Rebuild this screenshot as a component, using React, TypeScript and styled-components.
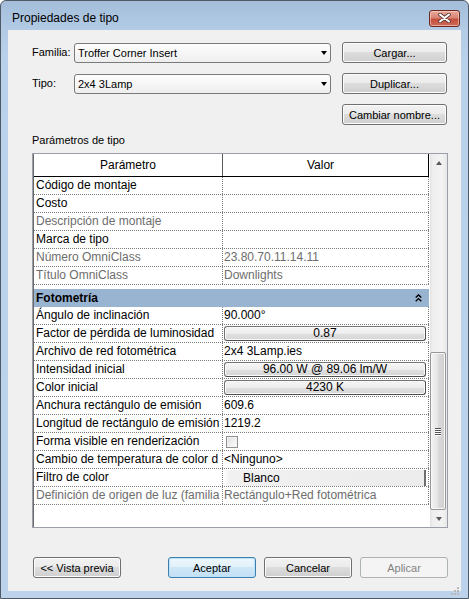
import React from 'react';
import styled, { createGlobalStyle } from 'styled-components';

const Global = createGlobalStyle`
  html, body { margin: 0; padding: 0; background: #ffffff; }
  body { font-family: "Liberation Sans", Arial, sans-serif; color: #000; }
  * { box-sizing: border-box; }
`;

const Window = styled.div`
  position: relative;
  width: 469px;
  height: 599px;
  border: 1px solid #4f5a66;
  border-radius: 6px 6px 0 0;
  background: linear-gradient(#a3bdda 0px, #b3cbe5 29px, #b9d1ea 60px, #bcd3eb 100%);
  display: flex;
  flex-direction: column;
  overflow: hidden;
`;

const TitleBar = styled.div`
  height: 29px;
  padding: 5px 8px 0 11px;
  display: flex;
  align-items: center;
  justify-content: space-between;
`;

const TitleText = styled.div`
  font-size: 12px;
  color: #000;
  line-height: 14px;
`;

const CloseButton = styled.div`
  width: 31px;
  height: 17px;
  border: 1px solid #6b2b23;
  border-radius: 3px;
  background: linear-gradient(#e9a99b 0%, #d98575 45%, #c4503e 55%, #cf6a58 100%);
  box-shadow: inset 0 0 0 1px rgba(255, 220, 210, 0.55);
  display: flex;
  align-items: center;
  justify-content: center;
`;

const Client = styled.div`
  position: relative;
  flex: 1;
  margin: 0 7px 7px 7px;
  background: #f0f0f0;
  padding: 12px 13px 13px 24px;
  display: flex;
  flex-direction: column;
`;

const TopGrid = styled.div`
  display: grid;
  grid-template-columns: 42px 257px 116px;
  grid-auto-rows: 21px;
  row-gap: 10px;
  align-items: center;
`;

const Label = styled.div`
  font-size: 11px;
  line-height: 13px;
`;

const Combo = styled.div`
  height: 20px;
  border: 1px solid #7a7a7a;
  border-radius: 3px;
  background: linear-gradient(#fdfdfd 0%, #f6f6f6 50%, #eeeeee 100%);
  display: flex;
  align-items: center;
  justify-content: space-between;
  padding: 0 3px 0 3px;
  font-size: 11px;
`;

const Arrow = styled.div<{ dir?: 'up' | 'down'; color?: string }>`
  width: 0;
  height: 0;
  border-left: 3.5px solid transparent;
  border-right: 3.5px solid transparent;
  ${(p) =>
    p.dir === 'up'
      ? `border-bottom: 4px solid ${p.color || '#000'};`
      : `border-top: 4px solid ${p.color || '#000'};`}
`;

const Button = styled.div<{ variant?: 'default' | 'disabled'; w?: number }>`
  width: ${(p) => p.w ?? 105}px;
  height: 21px;
  justify-self: end;
  border: 1px solid ${(p) => (p.variant === 'default' ? '#3c7fb1' : p.variant === 'disabled' ? '#adb2b5' : '#707070')};
  border-radius: 3px;
  background: ${(p) =>
    p.variant === 'default'
      ? 'linear-gradient(#eef7fd 0%, #e1f0fa 50%, #cfe7f7 50%, #c3e0f5 100%)'
      : p.variant === 'disabled'
      ? '#f4f4f4'
      : 'linear-gradient(#f2f2f2 0%, #ebebeb 50%, #dddddd 50%, #cfcfcf 100%)'};
  box-shadow: inset 0 0 0 1px ${(p) => (p.variant === 'default' ? '#bde3f8' : p.variant === 'disabled' ? '#f4f4f4' : '#fcfcfc')};
  color: ${(p) => (p.variant === 'disabled' ? '#838383' : '#000')};
  font-size: 11px;
  display: flex;
  align-items: center;
  justify-content: center;
  white-space: nowrap;
`;

const SectionLabel = styled.div`
  margin-top: 8px;
  margin-bottom: 6px;
  font-size: 11px;
  line-height: 14px;
`;

const Table = styled.div`
  height: 375px;
  border: 1px solid #9a9ea6;
  background: #ffffff;
  display: flex;
`;

const Grid = styled.div`
  width: 396px;
  border-left: 1px solid #6a6a6a;
  display: flex;
  flex-direction: column;
  background: #fff;
`;

const HeaderRow = styled.div`
  display: grid;
  grid-template-columns: 189px 206px;
  height: 23px;
  border-bottom: 1px solid #000;
`;

const HeaderCell = styled.div<{ last?: boolean }>`
  border-right: 1px solid ${(p) => (p.last ? '#000' : '#5a5a5a')};
  font-size: 12px;
  display: flex;
  align-items: center;
  justify-content: center;
  padding-right: ${(p) => (p.last ? '10px' : '0')};
`;

const Row = styled.div`
  display: grid;
  grid-template-columns: 189px 206px;
  height: 18px;
  border-bottom: 1px dotted #7c7c7c;
`;

const NameCell = styled.div<{ muted?: boolean }>`
  border-right: 1px dotted #7c7c7c;
  font-size: 12px;
  line-height: 17px;
  padding-left: 2px;
  color: ${(p) => (p.muted ? '#6d6d6d' : '#000')};
  white-space: nowrap;
  overflow: hidden;
  text-overflow: clip;
  min-width: 0;
`;

const ValueCell = styled.div<{ muted?: boolean }>`
  border-right: 1px dotted #7c7c7c;
  font-size: 12px;
  line-height: 17px;
  padding-left: 1px;
  color: ${(p) => (p.muted ? '#6d6d6d' : '#000')};
  white-space: nowrap;
  overflow: hidden;
  min-width: 0;
  display: flex;
  align-items: stretch;
`;

const Section = styled.div`
  height: 22px;
  padding-top: 4px;
`;

const SectionBand = styled.div`
  height: 18px;
  background: #99b4d1;
  font-size: 12px;
  font-weight: bold;
  padding: 0 7px 0 2px;
  display: flex;
  align-items: center;
  justify-content: space-between;
`;

const ValueButton = styled.div`
  flex: 1;
  margin: 1px 2px 1px 0;
  border: 1px solid #737373;
  border-right-color: #4e4e4e;
  border-bottom-color: #4e4e4e;
  border-radius: 3px;
  background: linear-gradient(#f6f6f6 0%, #ededed 50%, #e0e0e0 51%, #d6d6d6 100%);
  box-shadow: inset 0 0 0 1px #fbfbfb;
  font-size: 12px;
  line-height: 13px;
  text-align: center;
  color: #000;
`;

const FlatValue = styled.div`
  flex: 1;
  margin: 1px 2px 0 0;
  border-right: 2px solid #6e6e6e;
  background: linear-gradient(90deg, #ffffff 0px, #f1f1f1 6px, #ececec 100%);
  padding-left: 19px;
  font-size: 12px;
  line-height: 16px;
  color: #000;
`;

const CheckBox = styled.div`
  width: 12px;
  height: 12px;
  margin: 3px 0 0 2px;
  border: 1px solid #8e8f8f;
  background: linear-gradient(135deg, #dcdcdc 0%, #f2f2f2 60%, #fbfbfb 100%);
  box-shadow: inset 0 0 0 1px #f4f4f4;
`;

const ScrollBar = styled.div`
  flex: 1;
  padding-left: 1px;
  display: flex;
  flex-direction: column;
  background: #fff;
`;

const ScrollInner = styled.div`
  flex: 1;
  display: flex;
  flex-direction: column;
  background: linear-gradient(90deg, #e3e3e3 0%, #eeeeee 15%, #f3f3f3 70%, #e8e8e8 100%);
`;

const ScrollArrowBox = styled.div`
  height: 17px;
  display: flex;
  align-items: center;
  justify-content: center;
`;

const Track = styled.div`
  flex: 1;
  display: flex;
  flex-direction: column;
`;

const Spacer = styled.div<{ h: number }>`
  height: ${(p) => p.h}px;
  flex-shrink: 0;
`;

const Thumb = styled.div`
  height: 158px;
  margin: 0 1px 0 0;
  border: 1px solid #979797;
  border-radius: 2px;
  background: linear-gradient(90deg, #f4f4f4 0%, #e6e6e6 45%, #d9d9d9 55%, #d0d0d0 100%);
  box-shadow: inset 0 0 0 1px #f8f8f8;
  display: flex;
  flex-direction: column;
  align-items: center;
  justify-content: center;
  gap: 1px;
`;

const GripLine = styled.div`
  width: 6px;
  height: 1px;
  background: #555;
  box-shadow: 0 1px 0 #fff;
`;

const BottomBar = styled.div`
  margin-top: 29px;
  padding-left: 1px;
  display: flex;
  align-items: center;
`;

const BottomGroup = styled.div`
  margin-left: auto;
  display: flex;
  gap: 8px;
`;

const SizeGrip = styled.div`
  position: absolute;
  right: 2px;
  bottom: 2px;
  width: 8px;
  height: 8px;
`;

type RowData = {
  name: string;
  value?: string;
  muted?: boolean;
  kind?: 'text' | 'button' | 'flat' | 'check';
};

const identity: RowData[] = [
  { name: 'Código de montaje' },
  { name: 'Costo' },
  { name: 'Descripción de montaje', muted: true },
  { name: 'Marca de tipo' },
  { name: 'Número OmniClass', value: '23.80.70.11.14.11', muted: true },
  { name: 'Título OmniClass', value: 'Downlights', muted: true },
];

const photometry: RowData[] = [
  { name: 'Ángulo de inclinación', value: '90.000°' },
  { name: 'Factor de pérdida de luminosidad', kind: 'button', value: '0.87' },
  { name: 'Archivo de red fotométrica', value: '2x4 3Lamp.ies' },
  { name: 'Intensidad inicial', kind: 'button', value: '96.00 W @ 89.06 lm/W' },
  { name: 'Color inicial', kind: 'button', value: '4230 K' },
  { name: 'Anchura rectángulo de emisión', value: '609.6' },
  { name: 'Longitud de rectángulo de emisión', value: '1219.2' },
  { name: 'Forma visible en renderización', kind: 'check' },
  { name: 'Cambio de temperatura de color d', value: '<Ninguno>' },
  { name: 'Filtro de color', kind: 'flat', value: 'Blanco' },
  { name: 'Definición de origen de luz (familia', value: 'Rectángulo+Red fotométrica', muted: true },
];

const ParamRow: React.FC<{ r: RowData }> = ({ r }) => (
  <Row>
    <NameCell muted={r.muted}>{r.name}</NameCell>
    <ValueCell muted={r.muted}>
      {r.kind === 'button' ? (
        <ValueButton>{r.value}</ValueButton>
      ) : r.kind === 'flat' ? (
        <FlatValue>{r.value}</FlatValue>
      ) : r.kind === 'check' ? (
        <CheckBox />
      ) : (
        <span>{r.value ?? ''}</span>
      )}
    </ValueCell>
  </Row>
);

const CloseX = () => (
  <svg width="13" height="10" viewBox="0 0 13 10">
    <path d="M2 1.5 L11 8.5 M11 1.5 L2 8.5" stroke="#5a3a36" strokeWidth="3.6" strokeLinecap="round" fill="none" />
    <path d="M2 1.5 L11 8.5 M11 1.5 L2 8.5" stroke="#ffffff" strokeWidth="2" strokeLinecap="round" fill="none" />
  </svg>
);

const Collapse = () => (
  <svg width="7" height="8" viewBox="0 0 7 8">
    <path d="M0.7 3.6 L3.5 0.9 L6.3 3.6 M0.7 7.3 L3.5 4.6 L6.3 7.3" stroke="#000" strokeWidth="1.4" fill="none" />
  </svg>
);

export default function App() {
  return (
    <>
      <Global />
      <Window>
        <TitleBar>
          <TitleText>Propiedades de tipo</TitleText>
          <CloseButton>
            <CloseX />
          </CloseButton>
        </TitleBar>
        <Client>
          <TopGrid>
            <Label>Familia:</Label>
            <Combo>
              <span>Troffer Corner Insert</span>
              <Arrow />
            </Combo>
            <Button>Cargar...</Button>
            <Label>Tipo:</Label>
            <Combo>
              <span>2x4 3Lamp</span>
              <Arrow />
            </Combo>
            <Button>Duplicar...</Button>
            <div />
            <div />
            <Button>Cambiar nombre...</Button>
          </TopGrid>
          <SectionLabel>Parámetros de tipo</SectionLabel>
          <Table>
            <Grid>
              <HeaderRow>
                <HeaderCell>Parámetro</HeaderCell>
                <HeaderCell last>Valor</HeaderCell>
              </HeaderRow>
              {identity.map((r) => (
                <ParamRow key={r.name} r={r} />
              ))}
              <Section>
                <SectionBand>
                  <span>Fotometría</span>
                  <Collapse />
                </SectionBand>
              </Section>
              {photometry.map((r) => (
                <ParamRow key={r.name} r={r} />
              ))}
            </Grid>
            <ScrollBar>
              <ScrollInner>
                <ScrollArrowBox>
                  <Arrow dir="up" color="#5a5a5a" />
                </ScrollArrowBox>
                <Track>
                  <Spacer h={181} />
                  <Thumb>
                    <GripLine />
                    <GripLine />
                    <GripLine />
                    <GripLine />
                  </Thumb>
                </Track>
                <ScrollArrowBox>
                  <Arrow dir="down" color="#5a5a5a" />
                </ScrollArrowBox>
              </ScrollInner>
            </ScrollBar>
          </Table>
          <BottomBar>
            <Button w={88}>&lt;&lt; Vista previa</Button>
            <BottomGroup>
              <Button variant="default" w={88}>Aceptar</Button>
              <Button w={88}>Cancelar</Button>
              <Button variant="disabled" w={88}>Aplicar</Button>
            </BottomGroup>
          </BottomBar>
          <SizeGrip>
            <svg width="8" height="8" viewBox="0 0 8 8">
              {[
                [6, 0],
                [6, 3],
                [3, 3],
                [6, 6],
                [3, 6],
                [0, 6],
              ].map(([x, y], i) => (
                <rect key={i} x={x} y={y} width="2" height="2" fill="#b8b8b8" />
              ))}
            </svg>
          </SizeGrip>
        </Client>
      </Window>
    </>
  );
}
